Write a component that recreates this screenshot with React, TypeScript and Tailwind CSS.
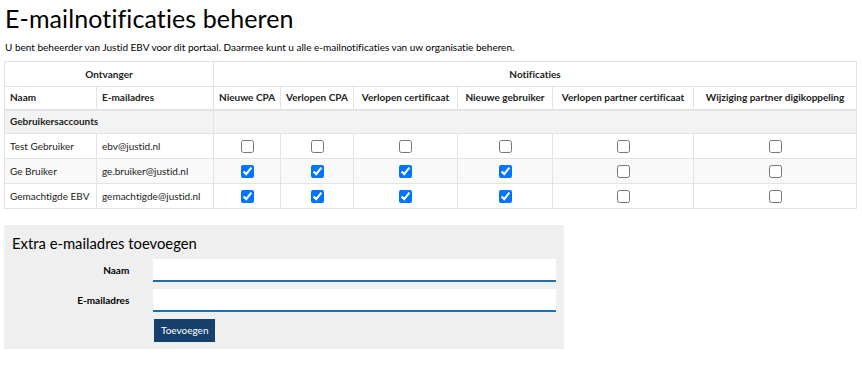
import { useState } from "react";

const COLS = [92, 117, 67, 73, 104, 95, 141, 163];

const NOTIFS = [
  "Nieuwe CPA",
  "Verlopen CPA",
  "Verlopen certificaat",
  "Nieuwe gebruiker",
  "Verlopen partner certificaat",
  "Wijziging partner digikoppeling",
];

const USERS = [
  { naam: "Test Gebruiker", email: "ebv@justid.nl", checks: [false, false, false, false, false, false] },
  { naam: "Ge Bruiker", email: "ge.bruiker@justid.nl", checks: [true, true, true, true, false, false] },
  { naam: "Gemachtigde EBV", email: "gemachtigde@justid.nl", checks: [true, true, true, true, false, false] },
];

const cell = "border border-[#e3e3e3] px-[5px] align-middle whitespace-nowrap";

export default function App() {
  const [users, setUsers] = useState(USERS);

  const toggle = (u: number, n: number) => {
    setUsers((prev) =>
      prev.map((row, i) =>
        i === u ? { ...row, checks: row.checks.map((c, j) => (j === n ? !c : c)) } : row
      )
    );
  };

  return (
    <div className="w-[862px] h-[365px] bg-white px-[4px] text-[#222] font-['Lato',sans-serif] [font-variant-ligatures:no-common-ligatures]">
      <h1 className="text-[25px] leading-[34px] pt-[1px] pl-[1px] tracking-[0.1px] text-black">
        E-mailnotificaties beheren
      </h1>
      <p className="text-[10px] leading-[16px] mt-[4px] pl-[1px] text-black">
        U bent beheerder van Justid EBV voor dit portaal. Daarmee kunt u alle e-mailnotificaties van uw organisatie beheren.
      </p>

      {/* Tabel */}
      <table className="mt-[6px] border-collapse table-fixed text-[10px]" style={{ width: 852 }}>
        <colgroup>
          {COLS.map((w, i) => (
            <col key={i} style={{ width: w }} />
          ))}
        </colgroup>
        <thead>
          <tr className="h-[25px]">
            <th colSpan={2} className={`${cell} font-bold text-center`}>Ontvanger</th>
            <th colSpan={6} className={`${cell} font-bold text-center`}>Notificaties</th>
          </tr>
          <tr className="h-[23px]">
            <th className={`${cell} border-b-2 font-bold text-left`}>Naam</th>
            <th className={`${cell} border-b-2 font-bold text-left`}>E-mailadres</th>
            {NOTIFS.map((n) => (
              <th key={n} className={`${cell} border-b-2 font-bold text-center`}>
                {n}
              </th>
            ))}
          </tr>
        </thead>
        <tbody>
          <tr className="h-[24px] bg-[#f3f3f3]">
            <td colSpan={2} className={`${cell} font-bold`}>Gebruikersaccounts</td>
            <td colSpan={6} className={cell}></td>
          </tr>
          {users.map((u, i) => (
            <tr key={u.email} className={`h-[25px] ${i % 2 === 1 ? "bg-[#f9f9f9]" : ""}`}>
              <td className={cell}>{u.naam}</td>
              <td className={cell}>{u.email}</td>
              {u.checks.map((c, j) => (
                <td key={j} className={`${cell} text-center`}>
                  <input
                    type="checkbox"
                    checked={c}
                    onChange={() => toggle(i, j)}
                    className="w-[13px] h-[13px] m-0 align-middle"
                  />
                </td>
              ))}
            </tr>
          ))}
        </tbody>
      </table>

      {/* Extra e-mailadres */}
      <div className="mt-[16px] w-[560px] bg-[#efefef] px-[8px] pt-[8px] pb-[7px]">
        <h2 className="text-[14.8px] leading-[20px] text-black">Extra e-mailadres toevoegen</h2>
        <div className="mt-[6px] flex flex-col gap-[7px]">
          {["Naam", "E-mailadres"].map((label) => (
            <div key={label} className="flex items-center">
              <label className="w-[118px] text-right text-[10px] font-bold text-black">{label}</label>
              <input
                type="text"
                className="ml-[24px] w-[405px] h-[23px] bg-white border-0 border-b-2 border-[#1f6fa8] outline-none px-2 text-[11px]"
              />
            </div>
          ))}
          <div className="flex pl-[142px]">
            <button className="h-[23px] px-[7px] bg-[#17406c] text-white text-[10px]">Toevoegen</button>
          </div>
        </div>
      </div>
    </div>
  );
}
